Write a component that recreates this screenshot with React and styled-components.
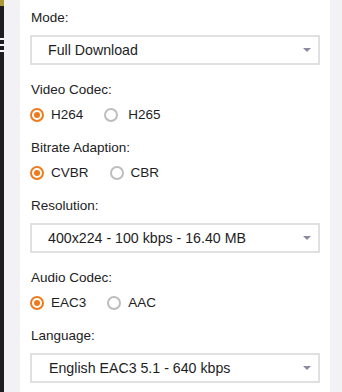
import styled, { createGlobalStyle } from "styled-components";

const GlobalStyle = createGlobalStyle`
  html, body {
    margin: 0;
    padding: 0;
    background: #f2f2f5;
  }
  body {
    font-family: "Liberation Sans", Arial, sans-serif;
  }
`;

const Page = styled.div`
  display: flex;
  height: 392px;
  width: 342px;
  overflow: hidden;
  background: #f2f2f5;
`;

const Rail = styled.div`
  display: flex;
  flex-direction: column;
  width: 4px;
  flex-shrink: 0;
  background: #1d1d22;
`;

const RailAccent = styled.div`
  height: 6px;
  background: #a89a3c;
  margin-bottom: 32px;
`;

const RailDash = styled.div`
  height: 2px;
  width: 4px;
  background: #f4f4f4;
  margin-bottom: 4px;
`;

const Panel = styled.div`
  display: flex;
  flex-direction: column;
  width: 310px;
  margin-left: 16px;
  padding: 9.5px 10px 0;
  box-sizing: border-box;
  background: #ffffff;
`;

const Field = styled.div`
  display: flex;
  flex-direction: column;
  margin-bottom: 17px;
`;

const Label = styled.div`
  font-size: 13.5px;
  line-height: 16px;
  color: #222;
  margin-bottom: 9px;
  padding-left: 1px;
`;

const Select = styled.div`
  display: flex;
  align-items: center;
  justify-content: space-between;
  height: 30px;
  box-sizing: border-box;
  border: 2px solid #e0e0e0;
  padding: 0 7px 0 ${(p) => p.$indent || 16}px;
  font-size: 14.2px;
  color: #1e1e1e;
`;

const Caret = styled.span`
  width: 0;
  height: 0;
  border-left: 4px solid transparent;
  border-right: 4px solid transparent;
  border-top: 4px solid #8b8aa0;
`;

const RadioRow = styled.div`
  display: flex;
  align-items: center;
  height: 16px;
  gap: 21px;
`;

const RadioItem = styled.div`
  display: flex;
  align-items: center;
  gap: ${(p) => p.$gap || 7}px;
  font-size: 13.5px;
  color: #1e1e1e;
`;

const RadioDot = styled.span`
  width: 14px;
  height: 14px;
  box-sizing: border-box;
  border-radius: 50%;
  border: 2px solid ${(p) => (p.$checked ? "#ef7a1c" : "#bdbdbd")};
  background: #fff;
  display: flex;
  align-items: center;
  justify-content: center;

  &::after {
    content: "";
    display: ${(p) => (p.$checked ? "block" : "none")};
    width: 6px;
    height: 6px;
    border-radius: 50%;
    background: #ef7a1c;
  }
`;

function Radio({ checked, children, gap }) {
  return (
    <RadioItem $gap={gap}>
      <RadioDot $checked={checked} />
      {children}
    </RadioItem>
  );
}

export default function App() {
  return (
    <>
      <GlobalStyle />
      <Page>
        <Rail>
          <RailAccent />
          <RailDash />
          <RailDash />
          <RailDash />
        </Rail>
        <Panel>
          <Field>
            <Label>Mode:</Label>
            <Select>
              Full Download
              <Caret />
            </Select>
          </Field>

          <Field>
            <Label>Video Codec:</Label>
            <RadioRow>
              <Radio checked>H264</Radio>
              <Radio gap={10}>H265</Radio>
            </RadioRow>
          </Field>

          <Field>
            <Label>Bitrate Adaption:</Label>
            <RadioRow>
              <Radio checked>CVBR</Radio>
              <Radio>CBR</Radio>
            </RadioRow>
          </Field>

          <Field>
            <Label>Resolution:</Label>
            <Select>
              400x224 - 100 kbps - 16.40 MB
              <Caret />
            </Select>
          </Field>

          <Field>
            <Label>Audio Codec:</Label>
            <RadioRow>
              <Radio checked>EAC3</Radio>
              <Radio>AAC</Radio>
            </RadioRow>
          </Field>

          <Field>
            <Label>Language:</Label>
            <Select $indent={17}>
              English EAC3 5.1 - 640 kbps
              <Caret />
            </Select>
          </Field>
        </Panel>
      </Page>
    </>
  );
}
